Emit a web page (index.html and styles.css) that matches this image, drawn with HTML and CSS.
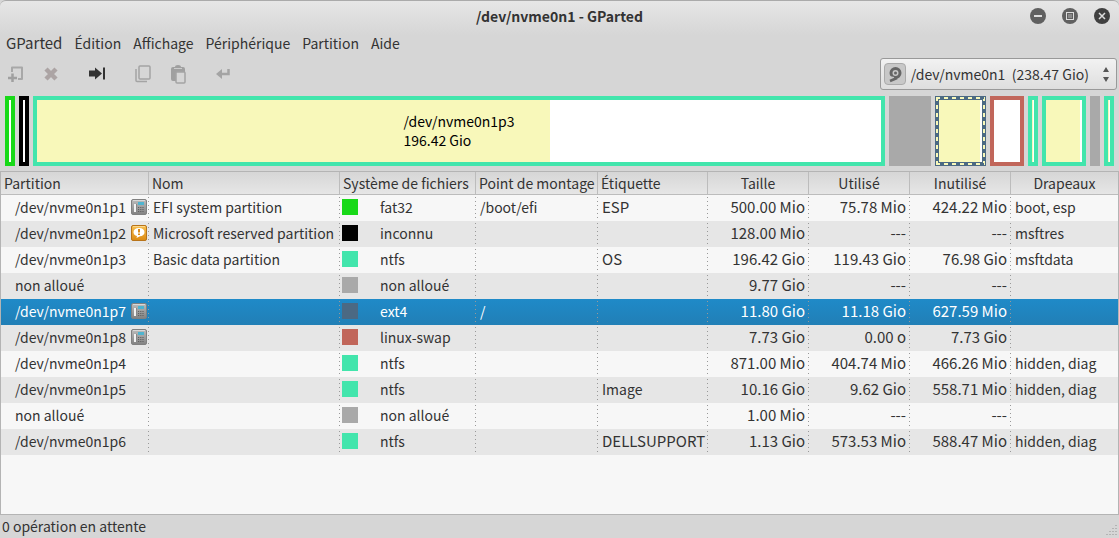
FILE: index.html
```html
<!DOCTYPE html>
<html lang="fr">
<head>
<meta charset="utf-8">
<title>/dev/nvme0n1 - GParted</title>
<link rel="stylesheet" href="styles.css">
</head>
<body>
<svg class="defs" width="0" height="0" aria-hidden="true">
  <defs>
    <linearGradient id="grey" x1="0" y1="0" x2="0" y2="1"><stop offset="0" stop-color="#bdbdbd"/><stop offset="1" stop-color="#828282"/></linearGradient>
    <linearGradient id="orange" x1="0" y1="0" x2="0" y2="1"><stop offset="0" stop-color="#f8c254"/><stop offset="1" stop-color="#dc8a12"/></linearGradient>
    <symbol id="phone" viewBox="0 0 16 16">
      <rect x=".5" y=".5" width="15" height="15" rx="1.5" fill="url(#grey)" stroke="#808080"/>
      <path d="M2 1.5h12" stroke="#d8d8d8"/>
      <rect x="3" y="5" width="2" height="8" fill="#f2f2f2"/><path d="M5.5 5v8.500h-3" fill="none" stroke="#888"/>
      <rect x="7" y="3" width="6" height="3" fill="#4fb4cf"/>
      <path d="M7 8.500h6M7 10.500h6M7 12.500h6" stroke="#606060" stroke-dasharray="1.200 1"/>
    </symbol>
    <symbol id="warn" viewBox="0 0 16 16">
      <rect x=".5" y=".5" width="15" height="15" rx="1.500" fill="url(#orange)" stroke="#b8741a"/>
      <path d="M2 1.500h12" stroke="#fbd88c"/>
      <path d="M8 3c3.500 0 5.500 1.700 5.500 4.200S11.500 11 9 11.200L5.500 13l.5-2C3.800 10.500 2.500 9.200 2.500 7.200 2.500 4.700 4.500 3 8 3z" fill="#fff"/>
      <path d="M7 4h2v3.500H7zM7 8.500h2v1.500H7z" fill="#d98b1a"/>
    </symbol>
  </defs>
</svg>
<div class="window">
  <header class="titlebar">
    <h1 class="title">/dev/nvme0n1 - GParted</h1>
    <div class="controls">
      <button class="control" aria-label="Réduire"><svg width="16" height="16"><path d="M4 8h8" stroke="#ddd" stroke-width="2"/></svg></button>
      <button class="control" aria-label="Agrandir"><svg width="16" height="16"><rect x="4.500" y="4.500" width="7" height="7" fill="none" stroke="#ddd"/><rect x="6" y="6" width="4" height="4" fill="#888"/></svg></button>
      <button class="control control-close" aria-label="Fermer"><svg width="16" height="16"><path d="M5 5l6 6M11 5l-6 6" stroke="#ddd" stroke-width="1.500"/></svg></button>
    </div>
  </header>
  <nav class="menubar">
    <button class="wide">GParted</button><button>Édition</button><button>Affichage</button><button>Périphérique</button><button>Partition</button><button>Aide</button>
  </nav>
  <div class="toolbar">
    <div class="tools">
      <button class="tool" aria-label="Nouvelle" disabled><svg width="16" height="16"><path d="M4 6V1.500h10v11.500H10" fill="none" stroke="#a8a8a8" stroke-width="2" stroke-linejoin="round"/><path d="M4.500 7.500v9M0 12h9" stroke="#a0a0a0" stroke-width="2.500"/></svg></button>
      <button class="tool" aria-label="Supprimer" disabled><svg width="16" height="16"><path d="M3 3l10 10M13 3L3 13" stroke="#aca4a4" stroke-width="4.500"/></svg></button>
      <button class="tool tool-apart" aria-label="Redimensionner"><svg width="18" height="16"><path d="M1 4.500h6V1.500l7 6L7 13.500v-3H1z" fill="#333"/><path d="M16 1.500v12" stroke="#333" stroke-width="2"/></svg></button>
      <button class="tool tool-apart" aria-label="Copier" disabled><svg width="16" height="18"><rect x="4" y="1" width="11" height="13" rx="1" fill="none" stroke="#a4a4a4" stroke-width="1.500"/><path d="M1 4v11.500a1 1 0 0 0 1 1h10" fill="none" stroke="#a4a4a4" stroke-width="1.500"/></svg></button>
      <button class="tool" aria-label="Coller" disabled><svg width="16" height="20"><path d="M1 5a2 2 0 0 1 2-2h2a3 2 0 0 1 6 0h2a2 2 0 0 1 2 2v3H7v9H3a2 2 0 0 1-2-2z" fill="#a0a0a0"/><path d="M4 4.500h8" stroke="#ccc"/><rect x="6" y="8" width="9" height="11" rx="1" fill="#d6d6d6" stroke="#a4a4a4" stroke-width="1.500"/></svg></button>
      <button class="tool tool-apart" aria-label="Appliquer" disabled><svg width="16" height="16"><path d="M13.500 3v5h-8" fill="none" stroke="#a4a4a4" stroke-width="2.500"/><path d="M1 8l6-5v10z" fill="#a4a4a4"/></svg></button>
    </div>
    <button class="device">
      <svg width="22" height="22"><rect x=".5" y=".5" width="21" height="21" rx="3.500" fill="#c8c8c8" stroke="#aaa"/><circle cx="11.500" cy="10" r="4.500" fill="none" stroke="#666" stroke-width="3"/><circle cx="11.500" cy="10" r="1.500" fill="#666"/><path d="M5 14l5 1" stroke="#c8c8c8" stroke-width="2"/><path d="M6 18l7-3" stroke="#666" stroke-width="2.500"/></svg>
      <span class="device-name">/dev/nvme0n1 &nbsp;(238.47 Gio)</span>
      <svg width="8" height="16"><path d="M4 1l3 5H1zM4 16l3-5H1z" fill="#555"/></svg>
    </button>
  </div>
  <div class="disk">
    <div class="part fat"></div>
    <div class="part unknown"></div>
    <div class="part ntfs"><div class="used" style="width:60.8%"></div><div class="part-label">/dev/nvme0n1p3<br>196.42 Gio</div></div>
    <div class="part free"></div>
    <div class="part ext selected"><div class="used" style="width:95%"></div></div>
    <div class="part swap"></div>
    <div class="part ntfs"><div class="used" style="width:46%"></div></div>
    <div class="part ntfs"><div class="used" style="width:94.6%"></div></div>
    <div class="part free"></div>
    <div class="part ntfs"><div class="used" style="width:50%"></div></div>
  </div>
  <main class="list">
    <table>
      <colgroup><col class="c-part"><col class="c-name"><col class="c-fs"><col class="c-mount"><col class="c-label"><col class="c-size"><col class="c-size"><col class="c-size"><col></colgroup>
      <thead><tr><th>Partition</th><th>Nom</th><th>Système de fichiers</th><th>Point de montage</th><th>Étiquette</th><th class="mid">Taille</th><th class="mid">Utilisé</th><th class="mid">Inutilisé</th><th class="mid">Drapeaux</th></tr></thead>
      <tbody>
        <tr><td><div class="dev">/dev/nvme0n1p1<svg width="16" height="16"><use href="#phone"/></svg></div></td><td>EFI system partition</td><td><div class="fs"><i class="swatch fat"></i>fat32</div></td><td>/boot/efi</td><td class="wide">ESP</td><td class="num">500.00 Mio</td><td class="num">75.78 Mio</td><td class="num">424.22 Mio</td><td>boot, esp</td></tr>
        <tr><td><div class="dev">/dev/nvme0n1p2<svg width="16" height="16"><use href="#warn"/></svg></div></td><td>Microsoft reserved partition</td><td><div class="fs"><i class="swatch unknown"></i>inconnu</div></td><td></td><td></td><td class="num">128.00 Mio</td><td class="num">---</td><td class="num">---</td><td>msftres</td></tr>
        <tr><td><div class="dev">/dev/nvme0n1p3</div></td><td>Basic data partition</td><td><div class="fs"><i class="swatch ntfs"></i>ntfs</div></td><td></td><td class="wide">OS</td><td class="num">196.42 Gio</td><td class="num">119.43 Gio</td><td class="num">76.98 Gio</td><td>msftdata</td></tr>
        <tr><td><div class="dev">non alloué</div></td><td></td><td><div class="fs"><i class="swatch free"></i>non alloué</div></td><td></td><td></td><td class="num">9.77 Gio</td><td class="num">---</td><td class="num">---</td><td></td></tr>
        <tr class="current"><td><div class="dev">/dev/nvme0n1p7<svg width="16" height="16"><use href="#phone"/></svg></div></td><td></td><td><div class="fs"><i class="swatch ext"></i>ext4</div></td><td>/</td><td></td><td class="num">11.80 Gio</td><td class="num">11.18 Gio</td><td class="num">627.59 Mio</td><td></td></tr>
        <tr><td><div class="dev">/dev/nvme0n1p8<svg width="16" height="16"><use href="#phone"/></svg></div></td><td></td><td><div class="fs"><i class="swatch swap"></i>linux-swap</div></td><td></td><td></td><td class="num">7.73 Gio</td><td class="num">0.00 o</td><td class="num">7.73 Gio</td><td></td></tr>
        <tr><td><div class="dev">/dev/nvme0n1p4</div></td><td></td><td><div class="fs"><i class="swatch ntfs"></i>ntfs</div></td><td></td><td></td><td class="num">871.00 Mio</td><td class="num">404.74 Mio</td><td class="num">466.26 Mio</td><td>hidden, diag</td></tr>
        <tr><td><div class="dev">/dev/nvme0n1p5</div></td><td></td><td><div class="fs"><i class="swatch ntfs"></i>ntfs</div></td><td></td><td>Image</td><td class="num">10.16 Gio</td><td class="num">9.62 Gio</td><td class="num">558.71 Mio</td><td>hidden, diag</td></tr>
        <tr><td><div class="dev">non alloué</div></td><td></td><td><div class="fs"><i class="swatch free"></i>non alloué</div></td><td></td><td></td><td class="num">1.00 Mio</td><td class="num">---</td><td class="num">---</td><td></td></tr>
        <tr><td><div class="dev">/dev/nvme0n1p6</div></td><td></td><td><div class="fs"><i class="swatch ntfs"></i>ntfs</div></td><td></td><td class="wide">DELLSUPPORT</td><td class="num">1.13 Gio</td><td class="num">573.53 Mio</td><td class="num">588.47 Mio</td><td>hidden, diag</td></tr>
      </tbody>
    </table>
  </main>
  <footer class="status"><span>0 opération en attente</span><svg class="grip" width="12" height="12"><path d="M9 1.500h2M6 4.500h5M3 7.500h8M0 10.500h11" stroke="#b4b4b4" stroke-dasharray="2 1"/></svg></footer>
</div>
</body>
</html>
```
FILE: styles.css
```css
* { box-sizing: border-box; }
body {
  margin: 0;
  background: #d6d6d6;
  color: #333;
  font: 14px/20px "Noto Sans CJK SC", "Noto Sans", sans-serif;
}
button { font: inherit; color: inherit; border: 0; padding: 0; background: none; }
svg { display: block; flex: none; }
.defs { position: absolute; }
.window {
  min-height: 100vh;
  display: flex;
  flex-direction: column;
  border-top: 1px solid #aaa;
  border-radius: 6px 6px 0 0;
  background: linear-gradient(#e6e6e6, #d6d6d6 34px);
}
.titlebar { display: grid; grid-template-columns: 1fr auto 1fr; align-items: center; height: 30px; padding: 0 9px; }
.title { grid-column: 2; margin: 0; font-size: 14px; line-height: 20px; font-weight: 700; }
.controls { display: flex; gap: 16px; justify-content: flex-end; }
.control { width: 16px; height: 16px; border-radius: 50%; background: #606060; }
.control-close { background: #404040; }
.menubar { display: flex; align-items: flex-start; gap: 12px; padding: 2px 6px; height: 27px; }
.menubar .wide, td.wide { font-size: 15px; }
.toolbar { display: flex; justify-content: space-between; align-items: flex-start; height: 34px; padding: 0 2px 0 8px; }
.tools { display: flex; align-items: center; gap: 19px; height: 32px; }
.tool-apart { margin-left: 10px; }
.device {
  display: flex;
  align-items: center;
  gap: 5px;
  height: 32px;
  padding: 0 6px 0 3px;
  border: 1px solid #999;
  border-radius: 3px;
  background: linear-gradient(#f2f2f2, #dedede);
}
.device-name { padding-right: 8px; }
.disk {
  display: grid;
  grid-template-columns:
    minmax(0, 10fr) minmax(0, 10fr) minmax(0, 852fr) minmax(0, 42fr) minmax(0, 51fr)
    minmax(0, 34fr) minmax(0, 10fr) minmax(0, 44fr) minmax(0, 10fr) minmax(0, 10fr);
  gap: 4px;
  height: 79px;
  padding: 4px 5px 5px;
}
.part { position: relative; height: 70px; border: 4px solid; background: #fff; }
.used { height: 100%; background: #f8f8ba; }
.part-label { position: absolute; inset: 0; display: grid; place-content: center; color: #000; line-height: 19px; }
.part.fat { border-color: #18d918; }
.part.unknown { border-color: #000; }
.part.ntfs { border-color: #42e5ac; }
.part.ext { border-color: #4b6983; }
.part.swap { border-color: #c1665a; }
.part.free { border-color: #a9a9a9; background: #a9a9a9; }
.selected::after {
  content: "";
  position: absolute;
  inset: -3px;
  background:
    repeating-linear-gradient(90deg, #f8f8ba 0 4px, #4b6983 4px 8px) top / 100% 2px no-repeat,
    repeating-linear-gradient(90deg, #f8f8ba 0 4px, #4b6983 4px 8px) bottom / 100% 2px no-repeat,
    repeating-linear-gradient(#f8f8ba 0 4px, #4b6983 4px 8px) left / 2px 100% no-repeat,
    repeating-linear-gradient(#f8f8ba 0 4px, #4b6983 4px 8px) right / 2px 100% no-repeat;
}
.list { flex: 1; border: 1px solid #b4b4b4; background: #f7f7f7; }
table { width: 100%; table-layout: fixed; border-collapse: separate; border-spacing: 0; }
.c-part { width: 148px; }
.c-name { width: 191px; }
.c-fs { width: 136px; }
.c-mount { width: 122px; }
.c-label { width: 110px; }
.c-size { width: 101px; }
th {
  height: 23px;
  padding: 0 3px;
  text-align: left;
  font-weight: 400;
  white-space: nowrap;
  background: linear-gradient(#d6d6d6, #e6e6e6);
  border-right: 1px solid #bcbcbc;
  border-bottom: 1px solid #bcbcbc;
}
th:last-child { border-right: 0; }
.mid { text-align: center; }
td {
  height: 26px;
  padding: 0 4px 2px;
  white-space: nowrap;
  background: repeating-linear-gradient(transparent 0 2px, #999 2px 3px, transparent 3px 4px) right / 1px 100% no-repeat;
}
td:last-child { background: none; }
tbody tr:nth-child(even) { background: #e6e6e6; }
tbody .current { color: #fff; background: linear-gradient(#1f8ac8, #217fb6); }
.num { text-align: right; font-size: 15px; }
.dev { display: flex; align-items: center; justify-content: space-between; padding-left: 10px; margin-right: -2px; }
.fs { display: flex; align-items: center; gap: 22px; margin-left: -2px; }
.swatch { width: 16px; height: 16px; }
.swatch.fat { background: #18d918; }
.swatch.unknown { background: #000; }
.swatch.ntfs { background: #42e5ac; }
.swatch.ext { background: #4b6983; }
.swatch.swap { background: #c1665a; }
.swatch.free { background: #a9a9a9; }
.status { display: flex; justify-content: space-between; align-items: flex-end; padding: 1px 1px 2px 2px; background: #d6d6d6; }
```
